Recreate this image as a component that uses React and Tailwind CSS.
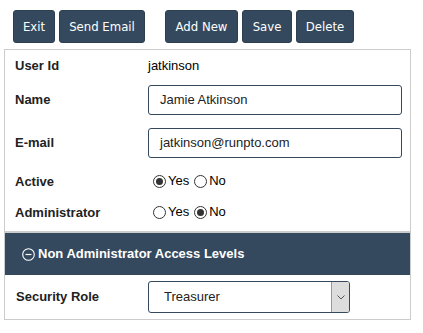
import React from "react";

function Btn({ children, className = "" }) {
  return (
    <button
      className={
        "h-[33px] rounded-[3px] bg-[#34495e] border border-[#2c3e50] text-white text-[13px] flex items-center justify-center " +
        className
      }
      style={{ fontFamily: "Tahoma, 'DejaVu Sans Condensed', 'Liberation Sans', sans-serif" }}
    >
      {children}
    </button>
  );
}

function Radio({ checked }) {
  return (
    <span className="inline-flex w-[13px] h-[13px] rounded-full border border-[#333] bg-white items-center justify-center">
      {checked && <span className="w-[7px] h-[7px] rounded-full bg-[#333]" />}
    </span>
  );
}

function RadioPair({ yes }) {
  return (
    <div className="flex items-center text-[13px] text-black">
      <Radio checked={yes} />
      <span className="ml-[2px]">Yes</span>
      <span className="ml-[5px] flex items-center">
        <Radio checked={!yes} />
      </span>
      <span className="ml-[2px]">No</span>
    </div>
  );
}

export default function App() {
  return (
    <div
      className="w-[423px] h-[333px] bg-white overflow-hidden"
      style={{ fontFamily: "'Liberation Sans', Arial, sans-serif" }}
    >
      <div className="flex pt-[10px] pl-[13px]">
        <Btn className="w-[42px]">Exit</Btn>
        <Btn className="w-[86px] ml-[4px]">Send Email</Btn>
        <Btn className="w-[73px] ml-[20px]">Add New</Btn>
        <Btn className="w-[50px] ml-[4px]">Save</Btn>
        <Btn className="w-[58px] ml-[4px]">Delete</Btn>
      </div>
      <div className="mt-[6px] ml-[4px] w-[407px] border border-[#ccc]">
        <div className="pt-[7px] pl-[10px] pb-[10px]">
          <div className="flex items-center h-[18px]">
            <div className="w-[133px] font-bold text-[13px] text-[#222]">User Id</div>
            <div className="text-[13px] text-black">jatkinson</div>
          </div>
          <div className="flex items-center h-[30px] mt-[10px]">
            <div className="w-[133px] font-bold text-[13px] text-[#222]">Name</div>
            <div className="w-[254px] h-[30px] border border-[#34495e] rounded-[3px] flex items-center pl-[11px] text-[13px] text-[#222]">
              Jamie Atkinson
            </div>
          </div>
          <div className="flex items-center h-[30px] mt-[13px]">
            <div className="w-[133px] font-bold text-[13px] text-[#222]">E-mail</div>
            <div className="w-[254px] h-[30px] border border-[#34495e] rounded-[3px] flex items-center pl-[11px] text-[13px] text-[#222]">
              jatkinson@runpto.com
            </div>
          </div>
          <div className="flex items-center h-[18px] mt-[14px]">
            <div className="w-[138px] font-bold text-[13px] text-[#222] pt-[2px]">Active</div>
            <RadioPair yes={true} />
          </div>
          <div className="flex items-center h-[18px] mt-[13px]">
            <div className="w-[138px] font-bold text-[13px] text-[#222] pt-[2px]">Administrator</div>
            <RadioPair yes={false} />
          </div>
        </div>
        <div className="h-[44px] bg-[#34495e] border-t-[2px] border-[#ccc] flex items-center pl-[17px] text-white font-bold text-[13px]">
          <svg width="13" height="13" viewBox="0 0 13 13" className="mr-[3px]">
            <circle cx="6.5" cy="6.5" r="5.8" fill="none" stroke="white" strokeWidth="1.1" />
            <line x1="3.5" y1="6.5" x2="9.5" y2="6.5" stroke="white" strokeWidth="1.2" />
          </svg>
          Non Administrator Access Levels
        </div>
        <div className="flex items-center pl-[11px] pt-[6px] pb-[6px]">
          <div className="w-[132px] font-bold text-[13px] text-[#222]">Security Role</div>
          <div className="w-[202px] h-[32px] border border-[#34495e] rounded-[3px] flex items-stretch overflow-hidden">
            <div className="flex-1 flex items-center pl-[15px] text-[13px] text-[#222]">Treasurer</div>
            <div className="w-[18px] bg-[#dddddd] border-l border-[#999] flex items-center justify-center">
              <svg width="8" height="5" viewBox="0 0 8 5">
                <polyline points="0.5,0.5 4,4 7.5,0.5" fill="none" stroke="#555" strokeWidth="1" />
              </svg>
            </div>
          </div>
        </div>
      </div>
    </div>
  );
}
